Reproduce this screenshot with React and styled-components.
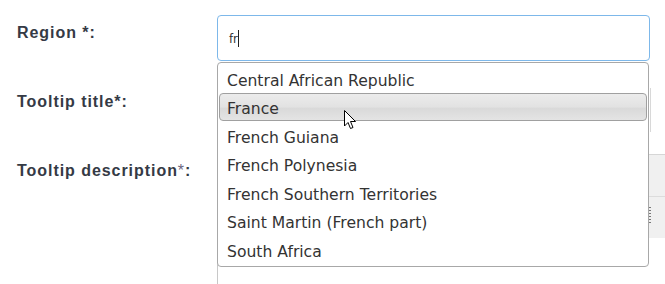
import React from 'react'
import styled, { createGlobalStyle } from 'styled-components'

const Global = createGlobalStyle`
  body {
    margin: 0;
    background: #fff;
    font-family: "Liberation Sans", Arial, sans-serif;
  }
`

const Form = styled.div`
  position: relative;
  width: 665px;
  height: 284px;
  overflow: hidden;
  padding-top: 15px;
  box-sizing: border-box;
`

const Row = styled.div`
  display: grid;
  grid-template-columns: 217px 433px;
  height: ${p => p.$h}px;
`

const Label = styled.div`
  padding: 8px 0 0 17px;
  line-height: 20px;
  font-size: 16px;
  font-weight: bold;
  letter-spacing: 0.95px;
  color: #353a45;
  white-space: nowrap;
  span {
    font-weight: normal;
    color: #6b6680;
  }
`

const Field = styled.div`
  position: relative;
`

const Input = styled.div`
  height: 46px;
  box-sizing: border-box;
  border: 1px solid #7db8ea;
  border-radius: 4px;
  padding: 0 11px;
  display: flex;
  align-items: center;
  font-family: "DejaVu Sans Condensed", "DejaVu Sans", sans-serif;
  font-size: 13px;
  color: #333;
`

const Caret = styled.i`
  display: inline-block;
  width: 1px;
  height: 17px;
  background: #222;
`

const Editor = styled.div`
  margin-top: 1px;
  width: 460px;
  height: 200px;
  border-left: 1px solid #c8c8c8;
  border-top: 1px solid #d6d6d6;
`

const Toolbar = styled.div`
  height: 83px;
  display: flex;
  flex-direction: column;
  background: #f0f0f0;
`

const ToolRow = styled.div`
  flex: 1;
  border-bottom: 1px solid #dcdcdc;
  &:last-child { border-bottom: none; }
`

const Grip = styled.div`
  position: absolute;
  left: 432px;
  top: 54px;
  width: 2px;
  height: 18px;
  background: repeating-linear-gradient(#777 0 1px, transparent 1px 3px);
`

const Scroll = styled.div`
  position: absolute;
  left: 433px;
  top: 73px;
  width: 1px;
  height: 44px;
  background: #d8d8d8;
`

const Dropdown = styled.ul`
  position: absolute;
  top: 47px;
  left: 0;
  width: 432px;
  height: 205px;
  box-sizing: border-box;
  margin: 0;
  padding: 1px 1px 0;
  list-style: none;
  background: #fff;
  border: 1px solid #a8a8a8;
  border-radius: 4px;
  z-index: 2;
`

const Item = styled.li`
  height: 28.5px;
  box-sizing: border-box;
  display: flex;
  align-items: center;
  padding: 5px 0 0 7px;
  font-family: "DejaVu Sans", Verdana, sans-serif;
  font-size: 15.6px;
  color: #333;
  border: 1px solid ${p => (p.$active ? '#a0a0a0' : 'transparent')};
  border-radius: 4px;
  background: ${p => (p.$active ? 'linear-gradient(#ececec, #e2e2e2 50%, #d9d9d9 55%, #e4e4e4)' : 'transparent')};
`

const Pointer = styled.svg`
  position: absolute;
  left: 344px;
  top: 110px;
  z-index: 5;
`

const countries = [
  'Central African Republic',
  'France',
  'French Guiana',
  'French Polynesia',
  'French Southern Territories',
  'Saint Martin (French part)',
  'South Africa',
]

export default function App() {
  return (
    <Form>
      <Global />
      <Row $h={69}>
        <Label>Region *:</Label>
        <Field>
          <Input>
            fr<Caret />
          </Input>
          <Dropdown>
            {countries.map(c => (
              <Item key={c} $active={c === 'France'}>{c}</Item>
            ))}
          </Dropdown>
          <Scroll />
        </Field>
      </Row>
      <Row $h={69}>
        <Label>Tooltip title*:</Label>
        <Field />
      </Row>
      <Row $h={140}>
        <Label>Tooltip description<span>*</span>:</Label>
        <Field>
          <Editor>
            <Toolbar>
              <ToolRow />
              <ToolRow />
            </Toolbar>
          </Editor>
          <Grip />
        </Field>
      </Row>
      <Pointer width="13" height="20" viewBox="0 0 13 20">
        <path d="M0.5 0.5 L0.5 16 L4 12.5 L6.5 18.5 L9 17.5 L6.5 11.5 L11.5 11.5 Z" fill="#fff" stroke="#000" strokeWidth="1" strokeLinejoin="miter" />
      </Pointer>
    </Form>
  )
}
